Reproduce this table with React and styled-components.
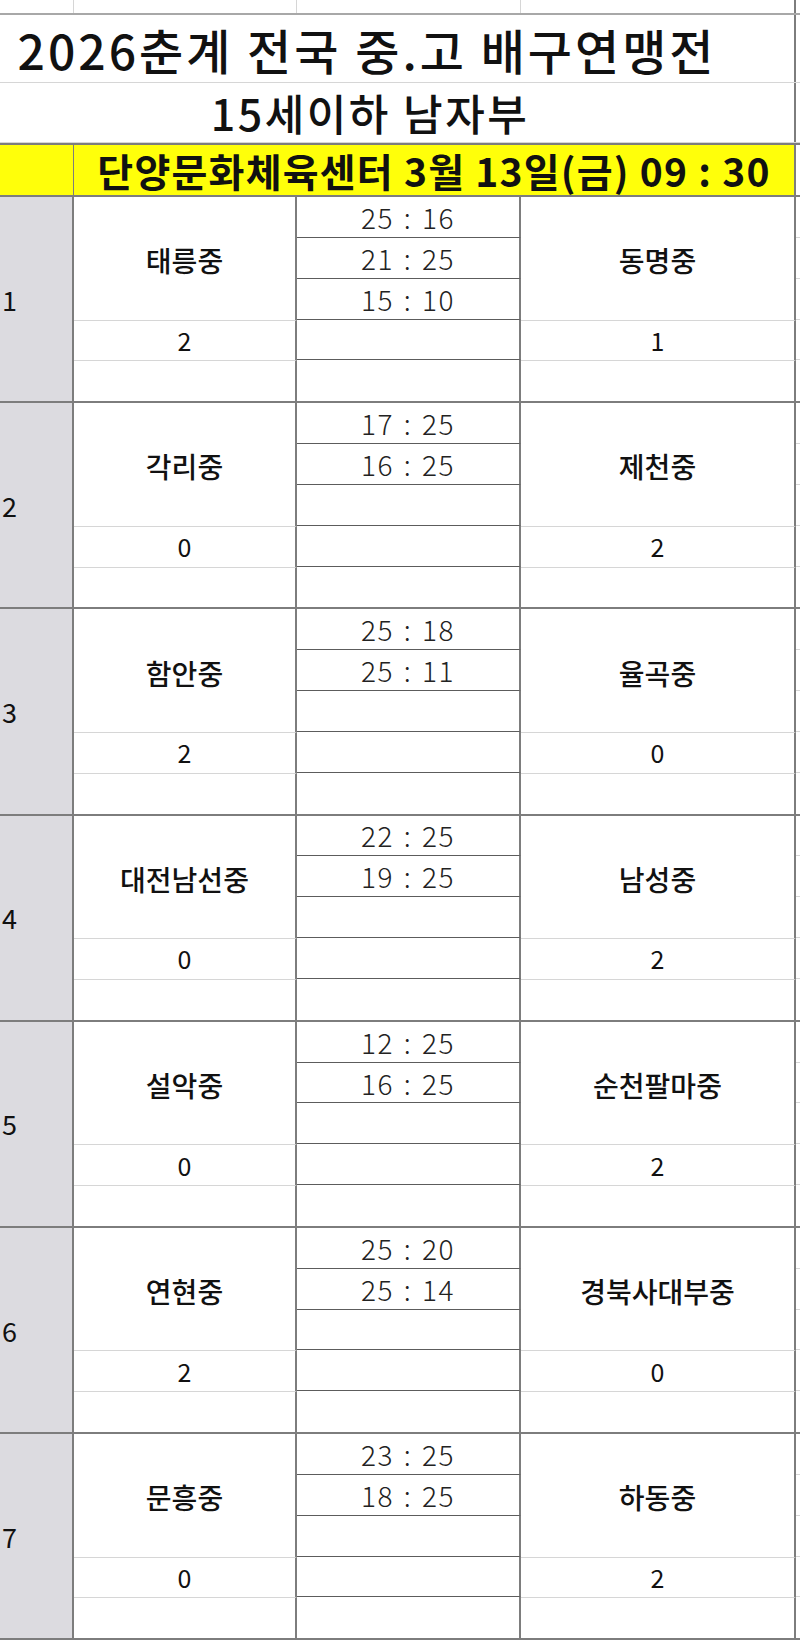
import styled, { createGlobalStyle } from "styled-components";

const GlobalStyle = createGlobalStyle`
  html, body {
    margin: 0;
    padding: 0;
    background: #fff;
  }
  body {
    font-family: "Noto Sans CJK KR", "Noto Sans", sans-serif;
    color: #111;
  }
`;

const COLS = "74px 223px 224px 275px 4px";
const DARK = "#7d7d7d";
const MID = "#5c5c5c";
const LIGHT = "#d6d6d6";

const matches = [
  { no: 1, home: "태릉중", homeSets: 2, away: "동명중", awaySets: 1, sets: ["25 : 16", "21 : 25", "15 : 10"] },
  { no: 2, home: "각리중", homeSets: 0, away: "제천중", awaySets: 2, sets: ["17 : 25", "16 : 25"] },
  { no: 3, home: "함안중", homeSets: 2, away: "율곡중", awaySets: 0, sets: ["25 : 18", "25 : 11"] },
  { no: 4, home: "대전남선중", homeSets: 0, away: "남성중", awaySets: 2, sets: ["22 : 25", "19 : 25"] },
  { no: 5, home: "설악중", homeSets: 0, away: "순천팔마중", awaySets: 2, sets: ["12 : 25", "16 : 25"] },
  { no: 6, home: "연현중", homeSets: 2, away: "경북사대부중", awaySets: 0, sets: ["25 : 20", "25 : 14"] },
  { no: 7, home: "문흥중", homeSets: 0, away: "하동중", awaySets: 2, sets: ["23 : 25", "18 : 25"] },
];

const Sheet = styled.div`
  width: 800px;
  height: 1640px;
  overflow: hidden;
  background: #fff;
`;

const TopStrip = styled.div`
  display: grid;
  grid-template-columns: ${COLS};
  height: 15px;
  box-sizing: border-box;
  border-bottom: 2px solid #a8a8a8;
`;

const StripCell = styled.div`
  border-right: ${({ $edge }) => ($edge ? `2px solid ${DARK}` : `1px solid ${LIGHT}`)};
`;

const HeadRow = styled.div`
  display: grid;
  grid-template-columns: 796px 4px;
  height: ${({ $h }) => $h}px;
  box-sizing: border-box;
  border-bottom: 1px solid ${LIGHT};
`;

const HeadCell = styled.div`
  display: flex;
  align-items: center;
  justify-content: center;
  box-sizing: border-box;
  border-right: 2px solid ${DARK};
  padding-right: ${({ $shift }) => $shift}px;
  font-size: ${({ $size }) => $size}px;
  font-weight: 500;
  letter-spacing: ${({ $track }) => $track}px;
  white-space: nowrap;
  line-height: 1;
`;

const VenueRow = styled.div`
  display: grid;
  grid-template-columns: 74px 722px 4px;
  height: 54px;
  box-sizing: border-box;
  border-top: 2px solid ${DARK};
  border-bottom: 2px solid ${DARK};
`;

const Yellow = styled.div`
  background: #ffff0a;
  box-sizing: border-box;
  border-right: ${({ $thin }) => ($thin ? `1px solid ${DARK}` : `2px solid ${DARK}`)};
  display: flex;
  align-items: center;
  justify-content: center;
  font-size: 39px;
  font-weight: 700;
  letter-spacing: 1.2px;
  white-space: nowrap;
  line-height: 1;
`;

const Group = styled.div`
  display: grid;
  grid-template-columns: ${COLS};
  grid-template-rows: repeat(5, 1fr);
  height: 206.2px;
  box-sizing: border-box;
  border-bottom: 2px solid ${DARK};
`;

const NumCell = styled.div`
  grid-column: 1;
  grid-row: 1 / 6;
  background: #dcdbe0;
  border-right: 2px solid ${DARK};
  display: flex;
  align-items: center;
  padding-left: 2px;
  font-size: 27px;
  line-height: 1;
`;

const TeamCell = styled.div`
  grid-column: ${({ $col }) => $col};
  grid-row: 1 / 4;
  display: flex;
  align-items: center;
  justify-content: center;
  padding-top: 4px;
  border-right: 2px solid ${DARK};
  font-size: 28px;
  font-weight: 500;
  white-space: nowrap;
  line-height: 1;
`;

const SetsCell = styled.div`
  grid-column: ${({ $col }) => $col};
  grid-row: ${({ $row }) => $row};
  display: flex;
  align-items: center;
  justify-content: center;
  border-top: 1px solid ${LIGHT};
  border-right: 2px solid ${DARK};
  font-size: 25px;
  line-height: 1;
`;

const ScoreCell = styled.div`
  grid-column: 3;
  grid-row: ${({ $row }) => $row};
  display: flex;
  align-items: center;
  justify-content: center;
  box-sizing: border-box;
  border-bottom: ${({ $last }) => ($last ? "none" : `1px solid ${MID}`)};
  border-right: 2px solid ${DARK};
  font-size: 28px;
  font-weight: 300;
  letter-spacing: 1.5px;
  word-spacing: 2px;
  white-space: nowrap;
  line-height: 1;
  color: #222;
`;

const Gutter = styled.div`
  grid-column: 5;
  grid-row: ${({ $row }) => $row};
  border-bottom: 1px solid ${LIGHT};
`;

const Match = ({ m }) => (
  <Group>
    <NumCell>{m.no}</NumCell>
    <TeamCell $col={2}>{m.home}</TeamCell>
    <SetsCell $col={2} $row={4}>{m.homeSets}</SetsCell>
    <SetsCell $col={2} $row={5} />
    {[0, 1, 2, 3, 4].map((i) => (
      <ScoreCell key={i} $row={i + 1} $last={i === 4}>
        {m.sets[i] || ""}
      </ScoreCell>
    ))}
    <TeamCell $col={4}>{m.away}</TeamCell>
    <SetsCell $col={4} $row={4}>{m.awaySets}</SetsCell>
    <SetsCell $col={4} $row={5} />
    {[1, 2, 3, 4].map((r) => (
      <Gutter key={r} $row={r} />
    ))}
  </Group>
);

const App = () => (
  <Sheet>
    <GlobalStyle />
    <TopStrip>
      <StripCell />
      <StripCell />
      <StripCell />
      <StripCell $edge />
      <div />
    </TopStrip>
    <HeadRow $h={68}>
      <HeadCell $size={48} $shift={60} $track={3}>
        2026춘계 전국 중.고 배구연맹전
      </HeadCell>
      <div />
    </HeadRow>
    <HeadRow $h={60}>
      <HeadCell $size={43} $shift={54} $track={2.5}>
        15세이하 남자부
      </HeadCell>
      <div />
    </HeadRow>
    <VenueRow>
      <Yellow $thin />
      <Yellow>단양문화체육센터 3월 13일(금) 09 : 30</Yellow>
      <div />
    </VenueRow>
    {matches.map((m) => (
      <Match key={m.no} m={m} />
    ))}
  </Sheet>
);

export default App;
